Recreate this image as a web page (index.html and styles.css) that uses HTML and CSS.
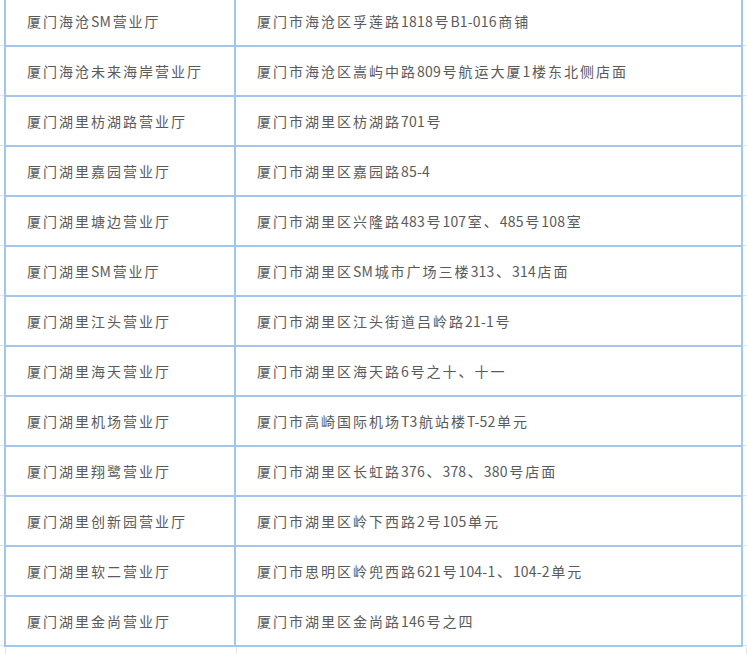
FILE: index.html
```html
<!DOCTYPE html>
<html lang="zh-CN">
<head>
<meta charset="utf-8">
<title>营业厅列表</title>
<link rel="stylesheet" href="styles.css">
</head>
<body>
<div class="table">
  <div class="row"><div class="cell name">厦门海沧<span class="lat">SM</span>营业厅</div><div class="cell addr">厦门市海沧区孚莲路<span class="lat">1818</span>号<span class="lat">B1-016</span>商铺</div></div>
  <div class="row"><div class="cell name">厦门海沧未来海岸营业厅</div><div class="cell addr">厦门市海沧区嵩屿中路<span class="lat">809</span>号航运大厦<span class="lat">1</span>楼东北侧店面</div></div>
  <div class="row"><div class="cell name">厦门湖里枋湖路营业厅</div><div class="cell addr">厦门市湖里区枋湖路<span class="lat">701</span>号</div></div>
  <div class="row"><div class="cell name">厦门湖里嘉园营业厅</div><div class="cell addr">厦门市湖里区嘉园路<span class="lat">85-4</span></div></div>
  <div class="row"><div class="cell name">厦门湖里塘边营业厅</div><div class="cell addr">厦门市湖里区兴隆路<span class="lat">483</span>号<span class="lat">107</span>室、<span class="lat">485</span>号<span class="lat">108</span>室</div></div>
  <div class="row"><div class="cell name">厦门湖里<span class="lat">SM</span>营业厅</div><div class="cell addr">厦门市湖里区<span class="lat">SM</span>城市广场三楼<span class="lat">313</span>、<span class="lat">314</span>店面</div></div>
  <div class="row"><div class="cell name">厦门湖里江头营业厅</div><div class="cell addr">厦门市湖里区江头街道吕岭路<span class="lat">21-1</span>号</div></div>
  <div class="row"><div class="cell name">厦门湖里海天营业厅</div><div class="cell addr">厦门市湖里区海天路<span class="lat">6</span>号之十、十一</div></div>
  <div class="row"><div class="cell name">厦门湖里机场营业厅</div><div class="cell addr">厦门市高崎国际机场<span class="lat">T3</span>航站楼<span class="lat">T-52</span>单元</div></div>
  <div class="row"><div class="cell name">厦门湖里翔鹭营业厅</div><div class="cell addr">厦门市湖里区长虹路<span class="lat">376</span>、<span class="lat">378</span>、<span class="lat">380</span>号店面</div></div>
  <div class="row"><div class="cell name">厦门湖里创新园营业厅</div><div class="cell addr">厦门市湖里区岭下西路<span class="lat">2</span>号<span class="lat">105</span>单元</div></div>
  <div class="row"><div class="cell name">厦门湖里软二营业厅</div><div class="cell addr">厦门市思明区岭兜西路<span class="lat">621</span>号<span class="lat">104-1</span>、<span class="lat">104-2</span>单元</div></div>
  <div class="row"><div class="cell name">厦门湖里金尚营业厅</div><div class="cell addr">厦门市湖里区金尚路<span class="lat">146</span>号之四</div></div>
</div>
<div class="ghost"><div class="ghost-cell"></div><div class="ghost-cell"></div></div>
</body>
</html>
```
FILE: styles.css
```css
html, body {
  margin: 0;
  padding: 0;
}
body {
  width: 747px;
  height: 654px;
  overflow: hidden;
  background: #fff;
  background-image: repeating-linear-gradient(to bottom, transparent 0 45px, #e4e4e4 45px 46px, transparent 46px 50px);
  font-family: "Noto Sans CJK SC", "Noto Sans", sans-serif;
  font-size: 14px;
  color: #5a5a5a;
  letter-spacing: 2px;
}
.lat {
  letter-spacing: 0.2px;
  margin-right: 1.5px;
}
.table {
  margin: -5px 0 0 4px;
  width: 739px;
  box-sizing: border-box;
  border: 2px solid #a3c7ec;
  border-bottom: none;
  background: #fff;
}
.row {
  display: grid;
  grid-template-columns: 230px 1fr;
  height: 50px;
  box-sizing: border-box;
  border-bottom: 2px solid #a3c7ec;
}
.cell {
  display: flex;
  align-items: center;
  padding: 0 0 1px 21px;
  white-space: pre;
}
.name {
  border-right: 2px solid #a3c7ec;
}
.ghost {
  display: grid;
  grid-template-columns: 231px 510px;
  margin-left: 5px;
  height: 20px;
  border-left: 1px solid #e4e4e4;
}
.ghost-cell {
  border-right: 1px solid #e4e4e4;
}
```
